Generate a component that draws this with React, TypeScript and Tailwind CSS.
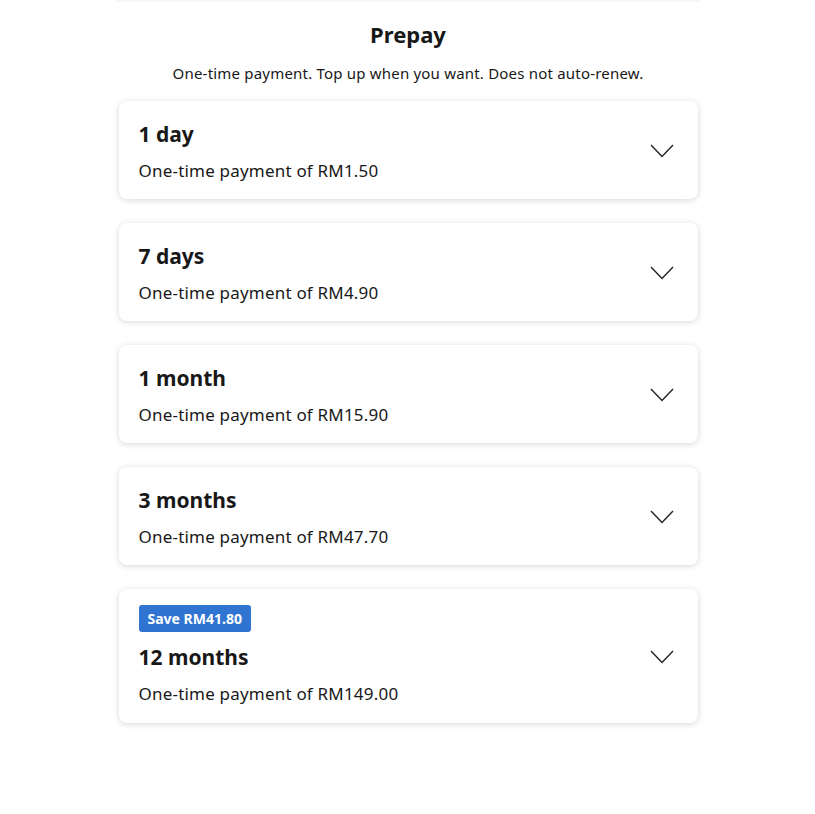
import * as React from "react"

const plans = [
  { title: "1 day", price: "RM1.50" },
  { title: "7 days", price: "RM4.90" },
  { title: "1 month", price: "RM15.90" },
  { title: "3 months", price: "RM47.70" },
  { title: "12 months", price: "RM149.00", badge: "Save RM41.80" },
]

const Chevron = () => (
  <svg width="24" height="14" viewBox="0 0 24 14" fill="none" className="mt-[2px]">
    <path d="M1 1L12 12.5L23 1" stroke="#222" strokeWidth="1.4" />
  </svg>
)

export default function App() {
  return (
    <div className="min-h-screen bg-white text-[#181818]" style={{ fontFamily: "'Noto Sans', sans-serif" }}>
      <div className="w-[582px] mx-auto h-0 shadow-[0_0_3px_1px_rgba(0,0,0,0.08)]" />
      <div className="w-[580px] mx-auto pl-px flex flex-col items-center">
        <h1 className="mt-[18px] text-[22px] leading-[32px] font-bold">Prepay</h1>
        <p className="mt-[15px] text-[15px] leading-[16px] tracking-[0.2px]">One-time payment. Top up when you want. Does not auto-renew.</p>
        <div className="mt-[20px] w-full flex flex-col gap-[24px]">
          {plans.map((p) => (
            <div
              key={p.title}
              className="flex items-center justify-between rounded-lg bg-white pl-5 pr-[24px] pt-[16px] pb-[16px] shadow-[0_1px_6px_rgba(0,0,0,0.16)]"
            >
              <div className="flex flex-col">
                {p.badge && (
                  <span className="mb-[8px] self-start flex items-center h-[27px] rounded-[3px] bg-[#2f74d0] px-[9px] text-[14px] font-bold text-white">
                    {p.badge}
                  </span>
                )}
                <span className="text-[21px] leading-[34px] font-bold">{p.title}</span>
                <span className={`mt-[8px] text-[17px] leading-[24px] tracking-[0.2px] ${p.badge ? "mb-px" : ""}`}>One-time payment of {p.price}</span>
              </div>
              <Chevron />
            </div>
          ))}
        </div>
      </div>
    </div>
  )
}
